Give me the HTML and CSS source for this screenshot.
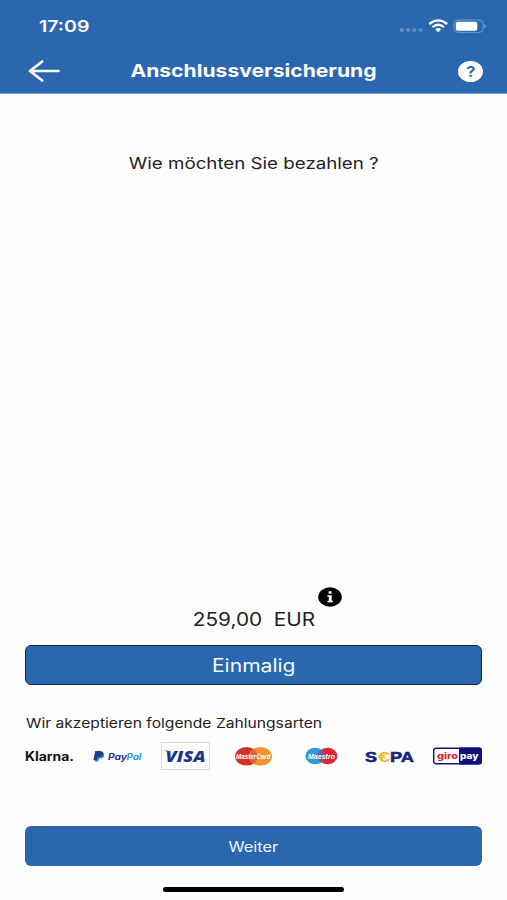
FILE: index.html
```html
<!DOCTYPE html>
<html lang="de">
<head>
    <meta charset="UTF-8">
    <meta name="viewport" content="width=device-width, initial-scale=1.0">
    <title>Anschlussversicherung</title>
    <link rel="stylesheet" href="styles.css">
</head>
<body>
    <div class="screen">
        <header class="header">
            <div class="status-bar">
                <span class="time wide">17:09</span>
                <div class="status-icons">
                    <svg width="86" height="16" viewBox="0 0 86 16">
                        <g fill="#5d8dc8">
                            <rect x="0" y="10.3" width="4" height="3.4" rx="1"/>
                            <rect x="6.2" y="10.3" width="4" height="3.4" rx="1"/>
                            <rect x="12.4" y="10.3" width="4" height="3.4" rx="1"/>
                            <rect x="18.6" y="10.3" width="4" height="3.4" rx="1"/>
                        </g>
                        <g fill="none" stroke="#fff" stroke-width="2.3">
                            <path d="M29.3 6Q38.2 -1.2 47.2 6"/>
                            <path d="M32.5 9.2Q38.2 4.4 44 9.2"/>
                        </g>
                        <path d="M35.2 11.3Q38.2 8.8 41.2 11.3L38.2 14.2Z" fill="#fff"/>
                        <rect x="54" y="2" width="29.3" height="12.4" rx="4" fill="none" stroke="#6f9bd0"/>
                        <rect x="55.8" y="3.8" width="21.5" height="8.9" rx="2" fill="#fff"/>
                        <path d="M84.5 5.8Q86.8 8.1 84.5 10.4Z" fill="#8fb1dc"/>
                    </svg>
                </div>
            </div>
            <div class="nav-bar">
                <svg class="back" width="33" height="24" viewBox="0 0 33 24">
                    <path d="M14.2 2.5L2 12L14.2 21.5M2 12H30.5" fill="none" stroke="#fff" stroke-width="2.7" stroke-linecap="round" stroke-linejoin="round"/>
                </svg>
                <h1 class="title wide">Anschlussversicherung</h1>
                <span class="help"><span class="wide">?</span></span>
            </div>
        </header>

        <main class="content">
            <p class="question"><span class="wide">Wie möchten Sie bezahlen ?</span></p>

            <div class="payment">
                <div class="price">
                    <span class="amount wide">259,00&nbsp; EUR</span>
                    <svg class="info" width="24" height="20" viewBox="0 0 24 20">
                        <ellipse cx="12" cy="10" rx="11.8" ry="9.7" fill="#000"/>
                        <path d="M10.6 4.3h3v2.4h-3zM9.4 8.2h4.3v5.5h1.2v1.6H9.4v-1.6h1.4v-3.9H9.4z" fill="#fff"/>
                    </svg>
                </div>
                <button class="btn btn-once"><span class="wide">Einmalig</span></button>
                <p class="accepted"><span class="wide">Wir akzeptieren folgende Zahlungsarten</span></p>
                <!-- Payment logos -->
                <div class="logos">
                    <svg width="49" height="28" viewBox="0 0 49 28">
                        <text class="klarna" x="0" y="18.8" textLength="49" lengthAdjust="spacingAndGlyphs">Klarna.</text>
                    </svg>
                    <svg width="49" height="28" viewBox="0 0 49 28">
                        <path d="M3.5 10.5H10q2 1.5 1 4-1 2.1-4 2.1H6l-.8 3H2z" fill="#2790c3"/>
                        <path d="M2.2 8.9H7.5q3.4.6 2.7 3.4-.7 2.7-4 2.7H4.5l-.7 3.2H.4z" fill="#1f3a86"/>
                        <text class="paypal" x="15" y="17.7" textLength="19" lengthAdjust="spacingAndGlyphs" fill="#28368b">Pay</text>
                        <text class="paypal" x="33.5" y="17.7" textLength="15" lengthAdjust="spacingAndGlyphs" fill="#2d9bd6">Pal</text>
                    </svg>
                    <svg width="49" height="28" viewBox="0 0 49 28">
                        <rect x=".5" y=".5" width="48" height="27" fill="#fefefe" stroke="#d9d9d9"/>
                        <text class="visa" x="4.5" y="20" textLength="40" lengthAdjust="spacingAndGlyphs">VISA</text>
                        <path d="M3 8.4H7.5L8.3 11Q6 9.2 3 8.4Z" fill="#5c5570"/>
                    </svg>
                    <svg width="49" height="28" viewBox="-5.5 0 49 28">
                        <ellipse cx="12" cy="14.3" rx="11.5" ry="9.3" fill="#d0302c"/>
                        <ellipse cx="26" cy="14.3" rx="11.5" ry="9.3" fill="#f2942c"/>
                        <path d="M19 6.9Q23 10 23 14.3T19 21.7Q15 18.6 15 14.3T19 6.9Z" fill="#dc6532"/>
                        <text class="card" x="1.5" y="17" textLength="34.5" lengthAdjust="spacingAndGlyphs">MasterCard</text>
                    </svg>
                    <svg width="49" height="28" viewBox="-8 0 49 28">
                        <ellipse cx="10.2" cy="14" rx="9.8" ry="8.2" fill="#3499d5"/>
                        <ellipse cx="22.6" cy="14" rx="9.8" ry="8.2" fill="#dc2830"/>
                        <path d="M16.4 7.7Q20 10.3 20 14T16.4 20.3Q12.8 17.7 12.8 14T16.4 7.7Z" fill="#775c8b"/>
                        <text class="card" x="3" y="16.7" textLength="27" lengthAdjust="spacingAndGlyphs">Maestro</text>
                    </svg>
                    <svg width="49" height="28" viewBox="0 0 49 28">
                        <text class="sepa" x="0" y="19.8" textLength="12" lengthAdjust="spacingAndGlyphs">S</text>
                        <text class="sepa euro" x="13" y="19.8" textLength="12" lengthAdjust="spacingAndGlyphs">€</text>
                        <text class="sepa" x="25" y="19.8" textLength="24" lengthAdjust="spacingAndGlyphs">PA</text>
                    </svg>
                    <svg width="49" height="28" viewBox="0 0 49 28">
                        <rect x=".7" y="6.2" width="47.6" height="15.6" rx="2.5" fill="#fff" stroke="#10146f" stroke-width="1.4"/>
                        <path d="M26 5.5H46Q49 5.5 49 8V20Q49 22.5 46 22.5H26Z" fill="#10107a"/>
                        <text class="giro" x="4" y="16.5" textLength="21" lengthAdjust="spacingAndGlyphs" fill="#e01f35">giro</text>
                        <text class="giro" x="27" y="16.5" textLength="18.5" lengthAdjust="spacingAndGlyphs" fill="#fff">pay</text>
                    </svg>
                </div>
            </div>

            <button class="btn btn-next"><span class="wide">Weiter</span></button>
            <div class="home-indicator"></div>
        </main>
    </div>
</body>
</html>
```
FILE: styles.css
```css
body, html {
    margin: 0;
    padding: 0;
    height: 100%;
    font-family: Inter, "Liberation Sans", sans-serif;
    overflow: hidden;
}

* {
    box-sizing: border-box;
}

.screen {
    width: 100%;
    height: 900px;
    display: flex;
    flex-direction: column;
    background-color: #fefefe;
    color: #222;
}

.wide {
    display: inline-block;
    white-space: nowrap;
    transform: scaleX(1.17);
}

/* Header */
.header {
    height: 94px;
    background-color: #2b67ae;
    border-bottom: 1px solid #7da3d0;
    color: #fff;
}

.status-bar {
    height: 48px;
    padding: 4px 21px 0 39px;
    display: flex;
    align-items: center;
    justify-content: space-between;
}

.time {
    font-size: 16px;
    font-weight: 600;
    transform: scaleX(1.22);
    transform-origin: left;
}

.status-icons svg {
    display: block;
}

.nav-bar {
    height: 46px;
    padding: 0 24px 0 28px;
    display: grid;
    grid-template-columns: 33px 1fr 37px;
    align-items: center;
}

.title {
    margin: 0;
    font-size: 18px;
    font-weight: 700;
    line-height: 24px;
    text-align: center;
    transform: scaleX(1.173);
}

.help {
    justify-self: end;
    width: 25px;
    height: 21px;
    border-radius: 50%;
    background-color: #fff;
    color: #2b67ae;
    font-size: 14px;
    font-weight: 700;
    line-height: 21px;
    text-align: center;
}

/* Content */
.content {
    flex: 1;
    display: flex;
    flex-direction: column;
    padding: 58px 25px 8px;
}

.question {
    margin: 0;
    font-size: 16px;
    line-height: 22px;
    text-align: center;
}

.payment {
    margin-top: auto;
}

.price {
    position: relative;
    height: 58px;
    padding-top: 20px;
    font-size: 18px;
    line-height: 26px;
    text-align: center;
}

.amount {
    transform: scaleX(1.155);
}

.info {
    position: absolute;
    top: 0;
    left: 293px;
}

.btn {
    display: block;
    width: 100%;
    height: 40px;
    padding: 0;
    border: none;
    border-radius: 6px;
    background-color: #2b67ae;
    color: #f2f8ff;
    font-family: inherit;
    text-align: center;
}

.btn-once {
    border: 1px solid #10243f;
    font-size: 18px;
}

.btn-next {
    flex-shrink: 0;
    margin-top: 56px;
    font-size: 14px;
}

.accepted {
    margin: 28px 0 9px;
    padding-left: 1px;
    font-size: 13px;
    line-height: 20px;
}

.accepted .wide {
    transform: scaleX(1.203);
    transform-origin: left;
}

.logos {
    display: flex;
    justify-content: space-between;
    align-items: center;
}

.klarna {
    font: 700 12.5px Inter, sans-serif;
    fill: #111;
}

.paypal {
    font: italic 700 9px Inter, sans-serif;
}

.visa {
    font: italic 800 16px "Open Sans", sans-serif;
    fill: #24338a;
}

.card {
    font: italic 700 7.5px "Liberation Sans", sans-serif;
    fill: #fff;
}

.sepa {
    font: 700 15.5px "Liberation Sans", sans-serif;
    fill: #17237e;
    stroke: #17237e;
    stroke-width: 0.6px;
}

.euro {
    fill: #f5b52e;
    stroke: none;
}

.giro {
    font: 800 9px Inter, sans-serif;
}

.home-indicator {
    flex-shrink: 0;
    width: 181px;
    height: 5px;
    margin: 21px auto 0;
    border-radius: 3px;
    background-color: #000;
}
```
